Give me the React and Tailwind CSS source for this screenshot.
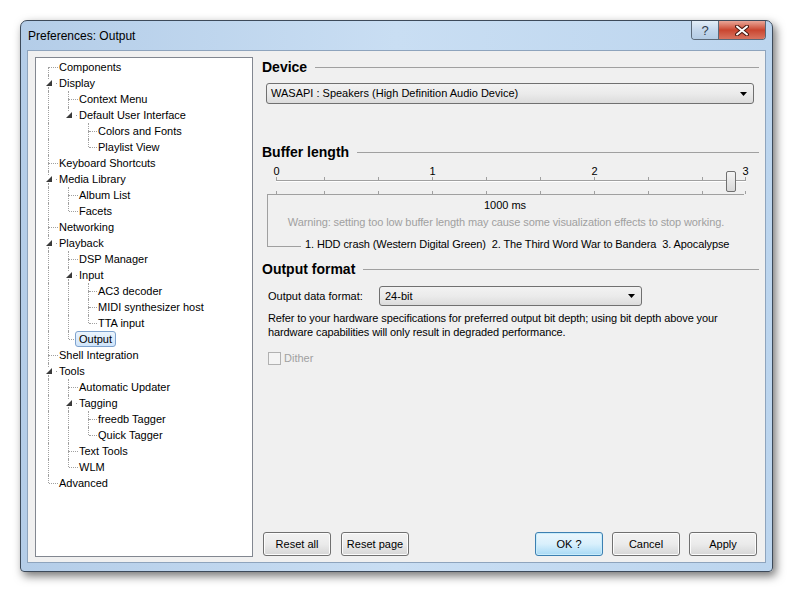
import React from "react";

const tree = [
  ["Components", 0],
  ["Display", 0],
  ["Context Menu", 1],
  ["Default User Interface", 1],
  ["Colors and Fonts", 2],
  ["Playlist View", 2],
  ["Keyboard Shortcuts", 0],
  ["Media Library", 0],
  ["Album List", 1],
  ["Facets", 1],
  ["Networking", 0],
  ["Playback", 0],
  ["DSP Manager", 1],
  ["Input", 1],
  ["AC3 decoder", 2],
  ["MIDI synthesizer host", 2],
  ["TTA input", 2],
  ["Output", 1],
  ["Shell Integration", 0],
  ["Tools", 0],
  ["Automatic Updater", 1],
  ["Tagging", 1],
  ["freedb Tagger", 2],
  ["Quick Tagger", 2],
  ["Text Tools", 1],
  ["WLM", 1],
  ["Advanced", 0],
];

// does row i have a later sibling at the same level
const hasNext = (i) => {
  const lvl = tree[i][1];
  for (let j = i + 1; j < tree.length; j++) {
    if (tree[j][1] < lvl) return false;
    if (tree[j][1] === lvl) return true;
  }
  return false;
};

const ancestorContinues = (i, l) => {
  for (let j = i - 1; j >= 0; j--) {
    if (tree[j][1] === l) return hasNext(j);
  }
  return false;
};

const Triangle = () => (
  <svg width="6" height="6" viewBox="0 0 6 6" className="absolute" style={{ top: 5 }}>
    <polygon points="6,0 6,6 0,6" fill="#3a3a3a" />
  </svg>
);

const dot = "absolute border-l border-dotted border-[#a0a0a0]";

const TreeRow = ({ i }) => {
  const [label, level] = tree[i];
  const expander = i + 1 < tree.length && tree[i + 1][1] > level;
  const x = 12 + 20 * level;
  const textX = Math.round(23 + 19.5 * level);
  const next = hasNext(i);
  const selected = label === "Output";
  const guides = [];
  for (let l = 0; l < level; l++) {
    if (ancestorContinues(i, l)) guides.push(12 + 20 * l);
  }

  return (
    <div className="relative h-4">
      {guides.map((g) => (
        <div key={g} className={dot + " top-0 bottom-0"} style={{ left: g }} />
      ))}
      {i > 0 && !expander && <div className={dot + " top-0 h-2"} style={{ left: x }} />}
      {i === 0 && <div className={dot + " top-[8px] h-2"} style={{ left: x }} />}
      {next && !expander && <div className={dot + " top-2 bottom-0"} style={{ left: x }} />}
      {expander && next && <div className={dot + " top-[12px] bottom-0"} style={{ left: x }} />}
      {expander && i > 0 && <div className={dot + " top-0 h-[4px]"} style={{ left: x }} />}
      {expander ? (
        <>
          <div className="absolute" style={{ left: x - 2 }}>
            <Triangle />
          </div>
          <div className="absolute top-[8px] w-px h-px bg-[#a0a0a0]" style={{ left: x + 8 }} />
        </>
      ) : (
        <div
          className="absolute top-[8px] border-t border-dotted border-[#a0a0a0]"
          style={{ left: x + 1, width: textX - x - (selected ? 6 : 2) }}
        />
      )}
      <div
        className={
          "absolute top-0 h-4 whitespace-nowrap " +
          (selected
            ? "border border-[#7da2ce] rounded-[3px] bg-gradient-to-b from-[#ebf4fd] to-[#cfe4fa] px-[3px] leading-[14px]"
            : "leading-4")
        }
        style={{ left: selected ? textX - 4 : textX }}
      >
        {label}
      </div>
    </div>
  );
};

const Header = ({ children }) => (
  <div className="flex items-center h-4 gap-2">
    <span className="font-bold text-[14px] text-black whitespace-nowrap">{children}</span>
    <div className="flex-1 h-px bg-[#a0a0a0]" />
  </div>
);

const Arrow = () => (
  <svg width="7" height="4" viewBox="0 0 7 4">
    <polygon points="0,0 7,0 3.5,4" fill="#000" />
  </svg>
);

const Button = ({ children, primary }) => (
  <button
    className={
      "w-[68px] h-[24px] rounded-[3px] border text-[11px] text-black " +
      (primary
        ? "border-[#3c7fb1] bg-gradient-to-b from-[#eaf6fd] via-[#d9f0fc] to-[#a7d9f5] shadow-[inset_0_0_0_1px_#c8ecfb]"
        : "border-[#707070] bg-gradient-to-b from-[#f2f2f2] via-[#ebebeb] to-[#d6d6d6] shadow-[inset_0_0_0_1px_#fcfcfc]")
    }
  >
    {children}
  </button>
);

const ticks = [276, 324, 378, 432, 486, 540, 594, 648, 702, 745];
const labels = [
  [276, "0"],
  [432, "1"],
  [594, "2"],
  [745, "3"],
];

export default function App() {
  return (
    <div className="w-[794px] h-[592px] bg-white pt-[20px] pl-[20px] font-['Liberation_Sans',sans-serif] text-[11px] text-black">
      <div className="w-[753px] h-[552px] rounded-t-[7px] rounded-b-[4px] border border-[#3d4a5a] bg-gradient-to-r from-[#b4cde8] via-[#c9def3] to-[#bcd5ee] shadow-[3px_4px_10px_rgba(0,0,0,0.55)] flex flex-col">
        <div className="h-[29px] flex items-start relative">
          <div className="pl-[7px] pt-[6px] text-[12px] text-black">Preferences: Output</div>
          <div className="ml-auto mr-[6px] flex h-[19px] rounded-b-[4px] border border-t-0 border-[#5a6878] overflow-hidden">
            <div className="w-[27px] flex items-center justify-center bg-gradient-to-b from-[#e3edf7] via-[#c4d7ec] to-[#b3cbe4] border-r border-[#5a6878] text-[13px] text-[#2e3b4b] leading-none">
              ?
            </div>
            <div className="w-[46px] flex items-center justify-center bg-gradient-to-b from-[#e8a597] via-[#c9452f] to-[#d8735f]">
              <svg width="14" height="11" viewBox="0 0 14 11">
                <path d="M2 1.5 L12 9.5 M12 1.5 L2 9.5" stroke="#4a1a12" strokeWidth="4" strokeLinecap="round" />
                <path d="M2 1.5 L12 9.5 M12 1.5 L2 9.5" stroke="#fff" strokeWidth="2" strokeLinecap="round" />
              </svg>
            </div>
          </div>
        </div>
        <div className="mx-[6px] mb-[8px] flex-1 border border-[#8ea4bd] bg-[#f0f0f0] flex pt-[6px] pl-[7px] pb-[5px] pr-[6px]">
          <div className="w-[218px] border border-[#828790] bg-white pt-px">
            {tree.map((_, i) => (
              <TreeRow key={i} i={i} />
            ))}
          </div>
          <div className="flex-1 ml-[9px] flex flex-col pt-[2px]">
            <Header>Device</Header>
            <div className="mt-[8px] ml-[4px] mr-[5px] h-[21px] rounded-[3px] border border-[#707070] bg-gradient-to-b from-[#f2f2f2] via-[#ebebeb] to-[#dcdcdc] flex items-center pl-[4px] pr-[6px]">
              <span className="flex-1">WASAPI : Speakers (High Definition Audio Device)</span>
              <Arrow />
            </div>

            <div className="mt-[40px]">
              <Header>Buffer length</Header>
            </div>
            <div className="relative h-[30px] mt-[4px]">
              {labels.map(([x, t]) => (
                <span key={t} className="absolute top-[2px] leading-none -translate-x-1/2" style={{ left: x - 262 + 0.5 }}>
                  {t}
                </span>
              ))}
              <div className="absolute top-[16px] left-[14px] w-[470px] h-px bg-[#a0a0a0]" />
              <div className="absolute top-[17px] left-[14px] w-[470px] h-px bg-white" />
              {ticks.map((x) => (
                <React.Fragment key={x}>
                  <div className="absolute top-[13px] w-px h-[3px] bg-[#a0a0a0]" style={{ left: x - 262 }} />
                  <div className="absolute top-[27px] w-px h-[3px] bg-[#a0a0a0]" style={{ left: x - 262 }} />
                </React.Fragment>
              ))}
              <div className="absolute top-[7px] left-[464px] w-[10px] h-[21px] rounded-[2px] border border-[#707070] bg-gradient-to-b from-[#f4f4f4] to-[#d8d8d8]" />
            </div>
            <div className="relative ml-[5px] mr-[15px] h-[53px] border-l border-t border-[#a0a0a0]">
              <div className="absolute bottom-0 left-0 w-[33px] h-px bg-[#a0a0a0]" />
              <div className="text-center pt-[3px] leading-[14px] pr-[2px]">1000 ms</div>
              <div className="text-center mt-[3px] leading-[14px] text-[#a0a0a0] tracking-[-0.1px]">
                Warning: setting too low buffer length may cause some visualization effects to stop working.
              </div>
              <div className="absolute left-[37px] bottom-[-4px] leading-[14px] whitespace-pre tracking-[-0.1px]">
                {"1. HDD crash (Western Digital Green)  2. The Third Word War to Bandera  3. Apocalypse"}
              </div>
            </div>

            <div className="mt-[14px]">
              <Header>Output format</Header>
            </div>
            <div className="mt-[9px] ml-[6px] flex items-center h-[20px]">
              <span className="w-[111px]">Output data format:</span>
              <div className="w-[263px] h-[20px] rounded-[3px] border border-[#707070] bg-gradient-to-b from-[#f2f2f2] via-[#ebebeb] to-[#dcdcdc] flex items-center pl-[5px] pr-[6px]">
                <span className="flex-1">24-bit</span>
                <Arrow />
              </div>
            </div>
            <div className="mt-[5px] ml-[6px] leading-[14px] tracking-[-0.1px]">
              Refer to your hardware specifications for preferred output bit depth; using bit depth above your
              <br />
              hardware capabilities will only result in degraded performance.
            </div>
            <div className="mt-[11px] ml-[6px] flex items-center gap-[3px] text-[#a0a0a0]">
              <div className="w-[13px] h-[13px] border border-[#b1b1b1] bg-[#f4f4f4]" />
              <span>Dither</span>
            </div>

            <div className="mt-auto mb-[1px] flex items-center">
              <div className="ml-[1px] flex gap-[10px]">
                <Button>Reset all</Button>
                <Button>Reset page</Button>
              </div>
              <div className="ml-auto flex gap-[9px] mr-[2px]">
                <Button primary>OK ?</Button>
                <Button>Cancel</Button>
                <Button>Apply</Button>
              </div>
            </div>
          </div>
        </div>
      </div>
    </div>
  );
}
